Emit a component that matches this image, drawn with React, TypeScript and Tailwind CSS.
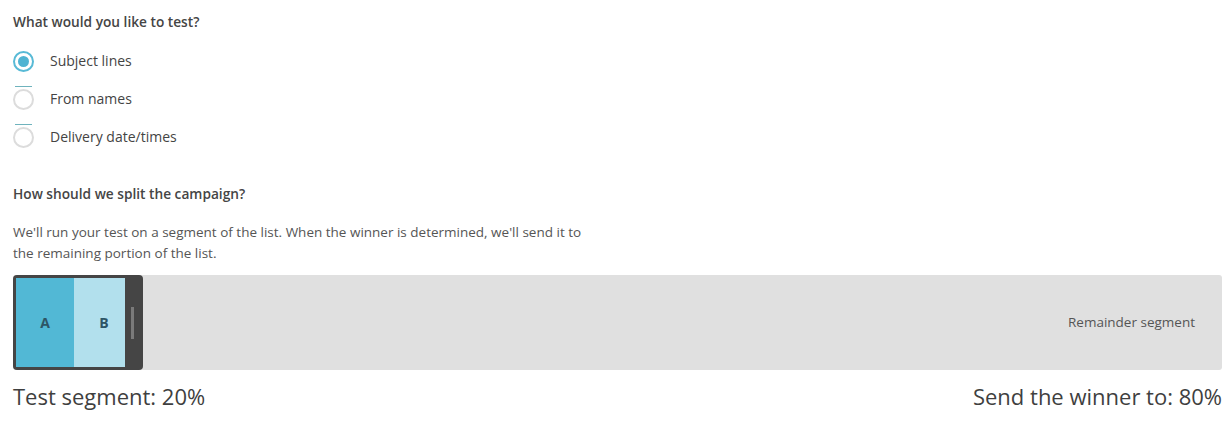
import { useState } from 'react'

const options = ['Subject lines', 'From names', 'Delivery date/times']

export default function App() {
  const [selected, setSelected] = useState(0)

  return (
    <div className="min-h-screen bg-white pl-[13px] pr-[9px] pt-[12px] text-[#444]" style={{ fontFamily: '"Open Sans", "Liberation Sans", sans-serif' }}>
      <h3 className="text-[13.7px] font-semibold leading-[20px] text-[#454545]">What would you like to test?</h3>

      {/* test type radios */}
      <div className="mt-[10px]">
        {options.map((opt, i) => (
          <label key={opt} className="flex h-[38px] cursor-pointer items-center" onClick={() => setSelected(i)}>
            {selected === i ? (
              <span className="flex h-[21px] w-[21px] items-center justify-center rounded-full border-2 border-[#58bad6] bg-white">
                <span className="h-[11px] w-[11px] rounded-full bg-[#4fb3d2]" />
              </span>
            ) : (
              <span className="relative h-[21px] w-[21px] rounded-full border-2 border-[#dcdcdc] bg-white">
                <span className="absolute -top-[5px] left-[0px] h-[1px] w-[17px] bg-[#6fb3bd]" />
              </span>
            )}
            <span className="ml-[16px] text-[14px] leading-[20px] text-[#444]">{opt}</span>
          </label>
        ))}
      </div>

      <h3 className="mt-[28px] text-[13.7px] font-semibold leading-[20px] text-[#454545]">How should we split the campaign?</h3>
      <p className="mt-[18px] max-w-[580px] text-[13.5px] leading-[21px] text-[#555]">
        We'll run your test on a segment of the list. When the winner is determined, we'll send it to the remaining portion of the list.
      </p>

      {/* split slider */}
      <div className="mt-[11px] flex h-[95px] items-stretch rounded-[3px] bg-[#e0e0e0]">
        <div className="flex w-[130px] rounded-[4px] bg-[#454545] p-[3px]">
          <div className="flex w-[58px] items-center justify-center bg-[#52b8d5] text-[14px] font-bold text-[#2d5566]">A</div>
          <div className="flex w-[51px] items-center justify-center bg-[#b2e0ed] pl-[9px] text-[14px] font-bold text-[#2d5566]">B</div>
          <div className="flex flex-1 items-center justify-center">
            <div className="h-[32px] w-[3px] bg-[#7a7a7a]" />
          </div>
        </div>
        <div className="flex flex-1 items-center justify-end pr-[27px] text-[13.5px] text-[#555]">Remainder segment</div>
      </div>

      <div className="mt-[11px] flex items-center justify-between text-[22px] font-medium leading-[30px] text-[#3f3f3f]">
        <span>Test segment: 20%</span>
        <span>Send the winner to: 80%</span>
      </div>
    </div>
  )
}
